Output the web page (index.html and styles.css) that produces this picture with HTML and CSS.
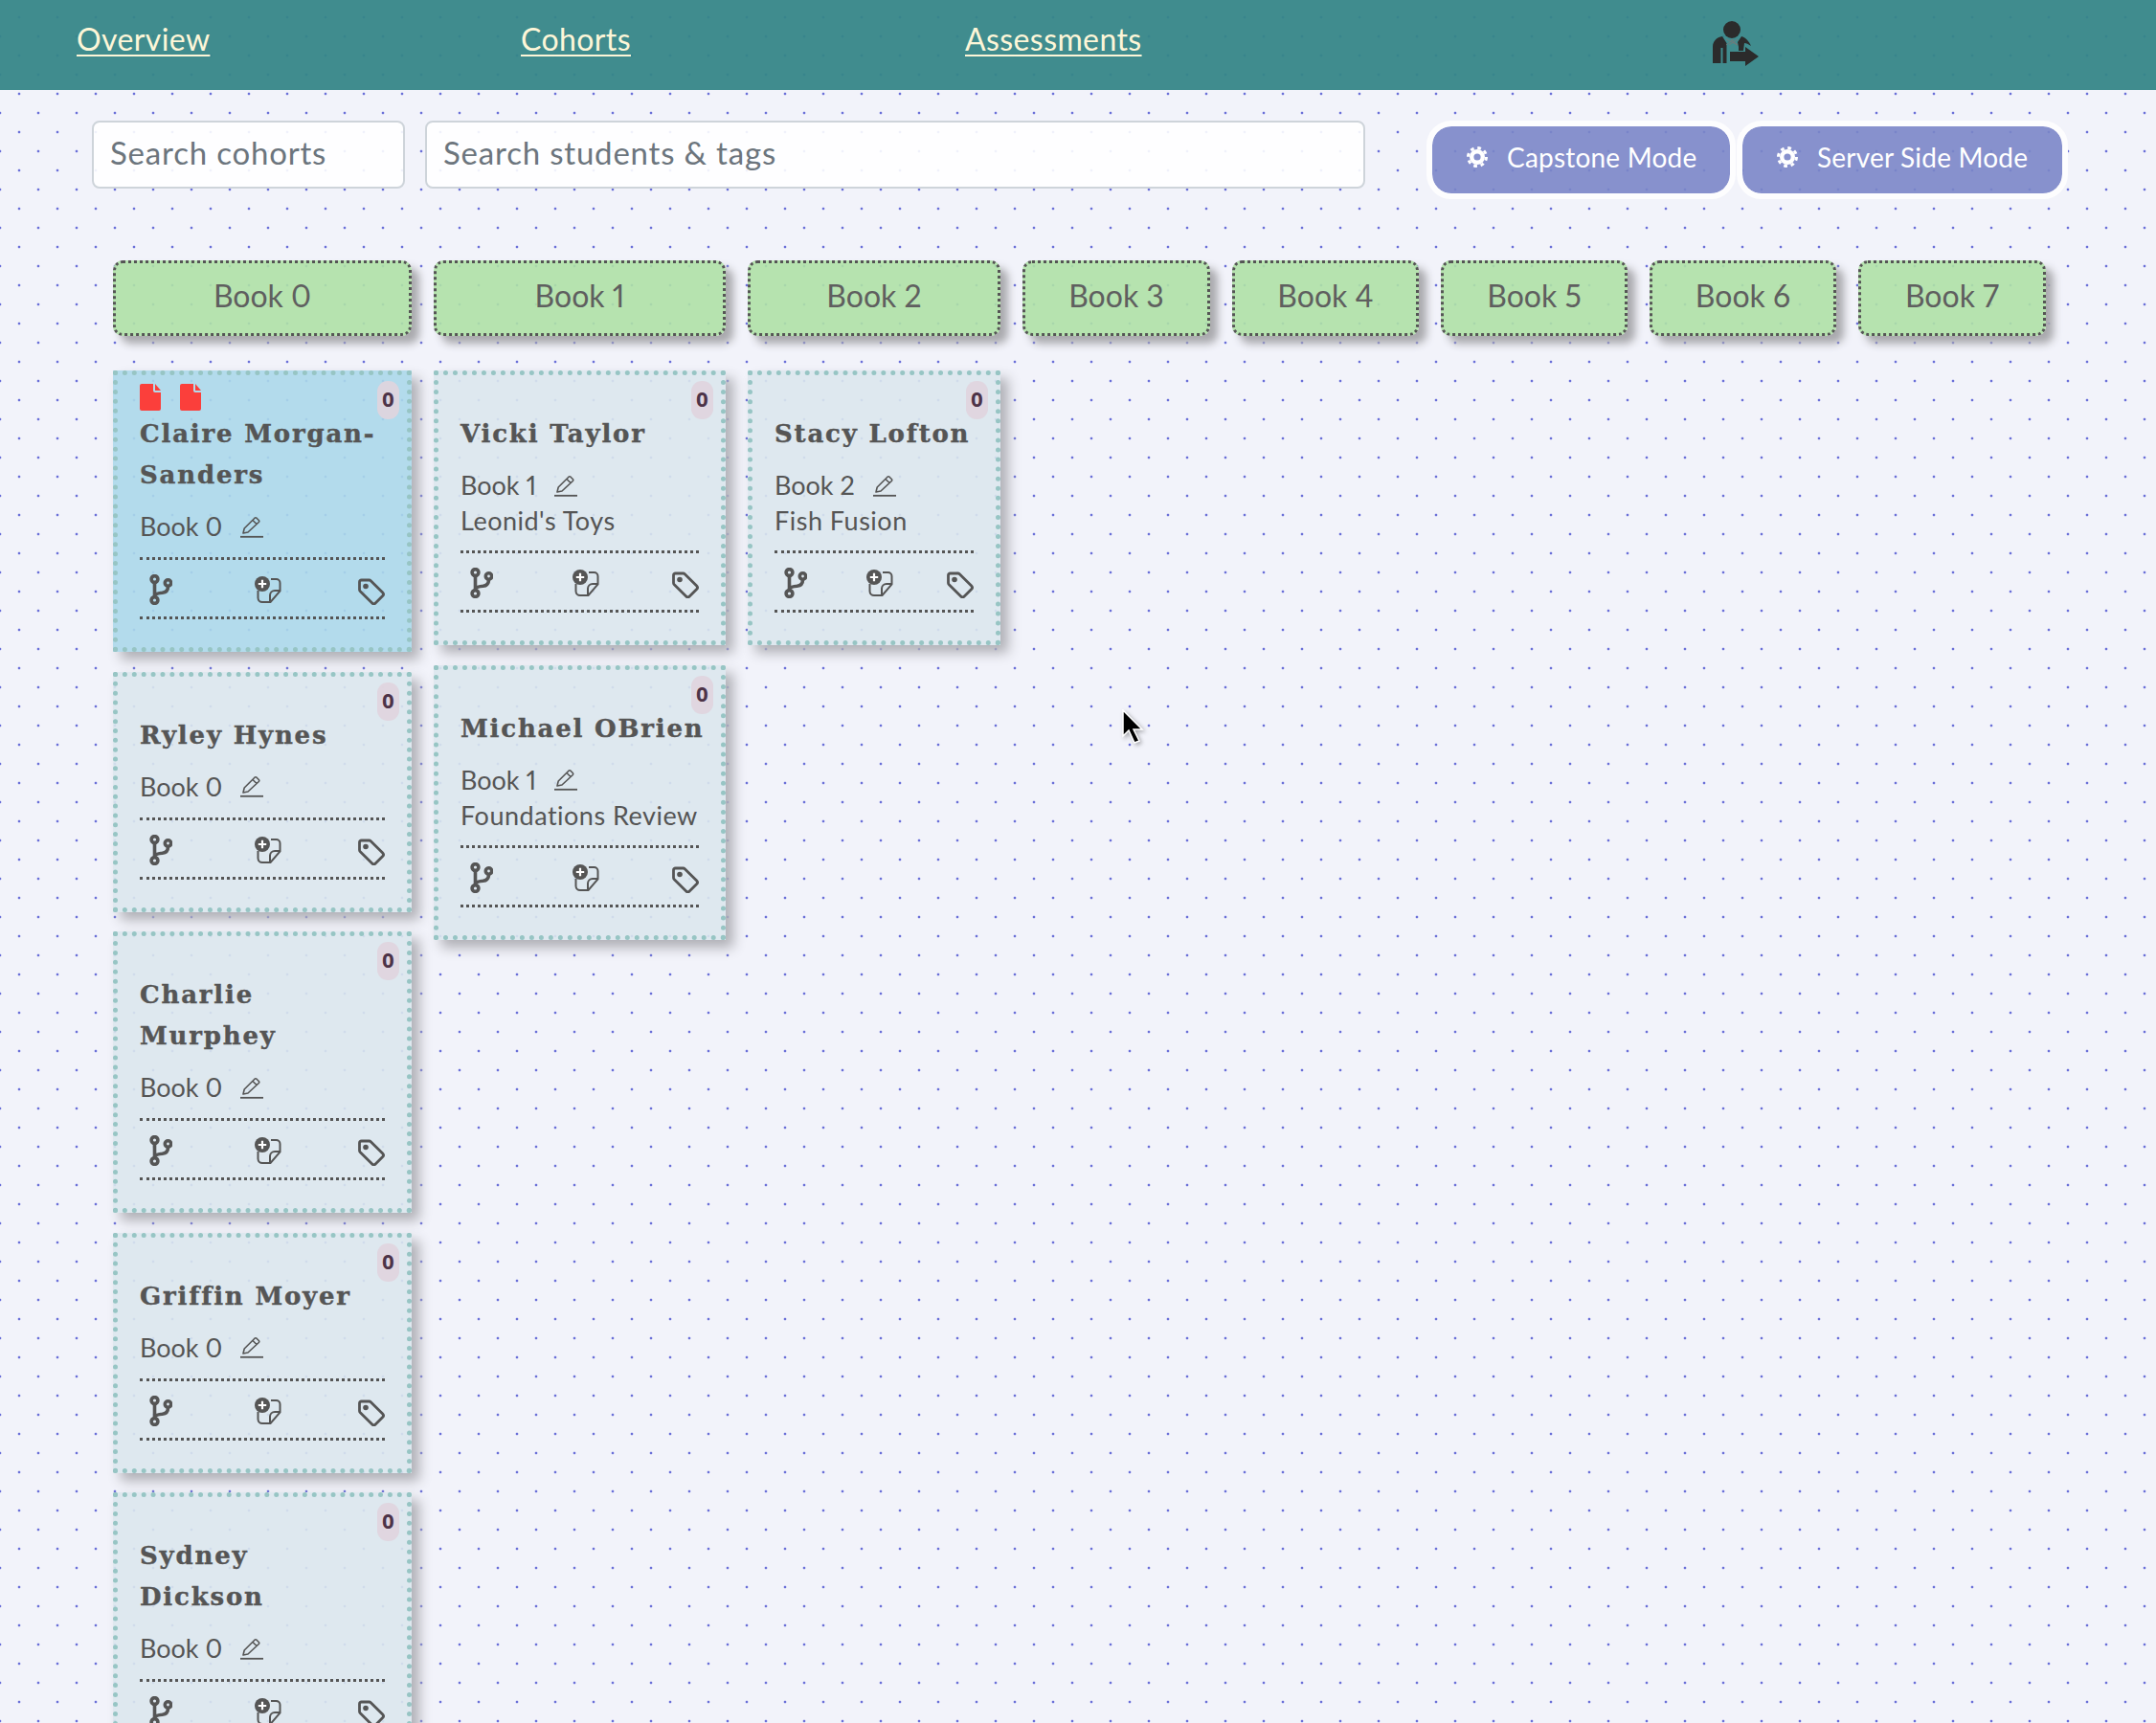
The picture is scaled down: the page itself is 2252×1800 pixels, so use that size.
FILE: index.html
```html
<!DOCTYPE html>
<html lang="en">
<head>
  <meta charset="UTF-8">
  <title>Student Board</title>
  <link rel="stylesheet" href="styles.css">
</head>
<body>
<svg class="defs" width="0" height="0">
  <symbol id="i-file" viewBox="0 0 22 28">
    <path d="M2 0h12v7a2 2 0 0 0 2 2h6v17a2 2 0 0 1-2 2H2a2 2 0 0 1-2-2V2a2 2 0 0 1 2-2z" fill="#fb3f3b"/>
    <path d="M16 0l6 7h-6z" fill="#fb3f3b"/>
  </symbol>
  <symbol id="i-pencil" viewBox="0 0 24 23">
    <path d="M3 18l1.2-5L15 2.2a1.5 1.5 0 0 1 2 0l2.300 2.300a1.500 1.500 0 0 1 0 2L8 17z M13 4.500l4.500 4.500" fill="none" stroke="#555" stroke-width="1.600" stroke-linejoin="round"/>
    <path d="M0 21.800h24" stroke="#555" stroke-width="1.800"/>
  </symbol>
  <symbol id="i-branch" viewBox="0 0 24 32">
    <g fill="none" stroke="#555" stroke-width="3.600">
      <circle cx="5.500" cy="5" r="3.400"/>
      <circle cx="5.500" cy="27" r="3.400"/>
      <circle cx="19.500" cy="9" r="3.200"/>
      <path d="M5.500 8.500v15 M19.500 12.500c0 5-3 6.500-6 6.800c-4 .3-8 1-8 4.200"/>
    </g>
  </symbol>
  <symbol id="i-note" viewBox="0 0 28 28">
    <path d="M17 3h5.500a4 4 0 0 1 4 4v8.500L16.500 27H8a4.500 4.500 0 0 1-4.500-4.500V15 M26.500 15H21a5 5 0 0 0-5 5v7" fill="none" stroke="#555" stroke-width="2"/>
    <circle cx="8" cy="8" r="8" fill="#555"/>
    <path d="M8 3.800v8.400 M3.800 8h8.400" stroke="#fff" stroke-width="2.200"/>
  </symbol>
  <symbol id="i-tag" viewBox="0 0 28 28">
    <path d="M3.500 2h8a2.500 2.500 0 0 1 1.800.7l12.400 12.400a2.500 2.500 0 0 1 0 3.500l-7.500 7.500a2.500 2.500 0 0 1-3.500 0L2.300 13.700a2.500 2.500 0 0 1-.8-1.800V4a2 2 0 0 1 2-2z" fill="none" stroke="#555" stroke-width="2.800"/>
    <circle cx="8" cy="8.500" r="2.800" fill="#555"/>
  </symbol>
  <symbol id="i-gear" viewBox="0 0 22 24">
    <circle cx="11" cy="12" r="5.800" fill="none" stroke="#fff" stroke-width="4.400"/>
    <circle cx="11" cy="12" r="9.500" fill="none" stroke="#fff" stroke-width="3" stroke-dasharray="3.700 3.760"/>
  </symbol>
</svg>

<header class="topnav">
  <a class="nav-link" href="#">Overview</a>
  <a class="nav-link" href="#">Cohorts</a>
  <a class="nav-link" href="#">Assessments</a>
  <svg class="logout" viewBox="0 0 50 48">
    <circle cx="21" cy="9" r="9" fill="#2b2b2b"/>
    <path d="M1 44V27c0-6 4-10 10-11l4.500 7V44h-4V28H9.500V44z" fill="#2b2b2b"/>
    <path d="M28 27l-1-5 4-6c4 1 8 5 10 10-3-2-5-3-7-3l-1 8h-5z" fill="#2b2b2b"/>
    <path d="M15 19l12 6 M18 25l9-6 M15 25l8-6 M20 19l7 6" stroke="#777" stroke-width=".8"/>
    <path d="M19 32h16v-5l14 10-14 10v-5H19z" fill="#2b2b2b"/>
  </svg>
</header>

<section class="toolbar">
  <input class="search search-cohort" type="text" placeholder="Search cohorts">
  <input class="search search-student" type="text" placeholder="Search students &amp; tags">
  <div class="modes">
    <button class="mode-btn mode-capstone"><svg class="gear"><use href="#i-gear"/></svg>Capstone Mode</button>
    <button class="mode-btn mode-server"><svg class="gear"><use href="#i-gear"/></svg>Server Side Mode</button>
  </div>
</section>

<main class="board">
  <div class="column">
    <div class="book-head">Book 0</div>
    <article class="card card-selected">
      <div class="badge">0</div>
      <div class="flags">
        <svg class="flag"><use href="#i-file"/></svg>
        <svg class="flag"><use href="#i-file"/></svg>
      </div>
      <h3 class="name">Claire Morgan-Sanders</h3>
      <div class="book-row">Book 0 <svg class="pencil"><use href="#i-pencil"/></svg></div>
      <div class="actions">
        <svg class="ic-branch"><use href="#i-branch"/></svg>
        <svg class="ic-note"><use href="#i-note"/></svg>
        <svg class="ic-tag"><use href="#i-tag"/></svg>
      </div>
    </article>
    <article class="card">
      <div class="badge">0</div>
      <div class="flags"></div>
      <h3 class="name">Ryley Hynes</h3>
      <div class="book-row">Book 0 <svg class="pencil"><use href="#i-pencil"/></svg></div>
      <div class="actions">
        <svg class="ic-branch"><use href="#i-branch"/></svg>
        <svg class="ic-note"><use href="#i-note"/></svg>
        <svg class="ic-tag"><use href="#i-tag"/></svg>
      </div>
    </article>
    <article class="card">
      <div class="badge">0</div>
      <div class="flags"></div>
      <h3 class="name">Charlie Murphey</h3>
      <div class="book-row">Book 0 <svg class="pencil"><use href="#i-pencil"/></svg></div>
      <div class="actions">
        <svg class="ic-branch"><use href="#i-branch"/></svg>
        <svg class="ic-note"><use href="#i-note"/></svg>
        <svg class="ic-tag"><use href="#i-tag"/></svg>
      </div>
    </article>
    <article class="card">
      <div class="badge">0</div>
      <div class="flags"></div>
      <h3 class="name">Griffin Moyer</h3>
      <div class="book-row">Book 0 <svg class="pencil"><use href="#i-pencil"/></svg></div>
      <div class="actions">
        <svg class="ic-branch"><use href="#i-branch"/></svg>
        <svg class="ic-note"><use href="#i-note"/></svg>
        <svg class="ic-tag"><use href="#i-tag"/></svg>
      </div>
    </article>
    <article class="card">
      <div class="badge">0</div>
      <div class="flags"></div>
      <h3 class="name">Sydney Dickson</h3>
      <div class="book-row">Book 0 <svg class="pencil"><use href="#i-pencil"/></svg></div>
      <div class="actions">
        <svg class="ic-branch"><use href="#i-branch"/></svg>
        <svg class="ic-note"><use href="#i-note"/></svg>
        <svg class="ic-tag"><use href="#i-tag"/></svg>
      </div>
    </article>
  </div>

  <div class="column">
    <div class="book-head">Book 1</div>
    <article class="card">
      <div class="badge">0</div>
      <div class="flags"></div>
      <h3 class="name">Vicki Taylor</h3>
      <div class="book-row">Book 1 <svg class="pencil"><use href="#i-pencil"/></svg></div>
      <div class="project">Leonid's Toys</div>
      <div class="actions">
        <svg class="ic-branch"><use href="#i-branch"/></svg>
        <svg class="ic-note"><use href="#i-note"/></svg>
        <svg class="ic-tag"><use href="#i-tag"/></svg>
      </div>
    </article>
    <article class="card">
      <div class="badge">0</div>
      <div class="flags"></div>
      <h3 class="name name-nowrap">Michael OBrien</h3>
      <div class="book-row">Book 1 <svg class="pencil"><use href="#i-pencil"/></svg></div>
      <div class="project">Foundations Review</div>
      <div class="actions">
        <svg class="ic-branch"><use href="#i-branch"/></svg>
        <svg class="ic-note"><use href="#i-note"/></svg>
        <svg class="ic-tag"><use href="#i-tag"/></svg>
      </div>
    </article>
  </div>

  <div class="column">
    <div class="book-head">Book 2</div>
    <article class="card">
      <div class="badge">0</div>
      <div class="flags"></div>
      <h3 class="name name-nowrap">Stacy Lofton</h3>
      <div class="book-row">Book 2 <svg class="pencil"><use href="#i-pencil"/></svg></div>
      <div class="project">Fish Fusion</div>
      <div class="actions">
        <svg class="ic-branch"><use href="#i-branch"/></svg>
        <svg class="ic-note"><use href="#i-note"/></svg>
        <svg class="ic-tag"><use href="#i-tag"/></svg>
      </div>
    </article>
  </div>

  <div class="column"><div class="book-head">Book 3</div></div>
  <div class="column"><div class="book-head">Book 4</div></div>
  <div class="column"><div class="book-head">Book 5</div></div>
  <div class="column"><div class="book-head">Book 6</div></div>
  <div class="column"><div class="book-head">Book 7</div></div>
</main>

<!-- mouse pointer caught in the screenshot -->
<svg class="cursor" viewBox="0 0 24 36">
  <path d="M2 1l20 20h-9l6 12-5 2-6-13-6 6z" fill="#000" stroke="#fff" stroke-width="1.500"/>
</svg>
</body>
</html>
```

FILE: styles.css
```css
/* global styles */
:root {
  --color-text: #555;
  --color-dot: #6a6fd8;
  --font-ui: Lato, "Noto Sans", sans-serif;
}

* {
  box-sizing: border-box;
}

html,
body {
  margin: 0;
  padding: 0;
  height: 100%;
  overflow: hidden;
}

body {
  position: relative;
  font-family: var(--font-ui);
  font-variant-numeric: proportional-nums;
  color: var(--color-text);
  background-color: #f2f3fa;
  background-image:
    radial-gradient(circle, var(--color-dot) 1.5px, transparent 1.6px),
    radial-gradient(circle, var(--color-dot) 1.5px, transparent 1.6px);
  background-size: 40px 40px;
  background-position: 0 -2px, 20px 18px;
}

.defs {
  position: absolute;
}

/* nav */
.topnav {
  display: flex;
  align-items: flex-start;
  height: 94px;
  padding: 19px 0 0 80px;
  background: rgba(54, 134, 136, 0.95);
}

.nav-link {
  width: 464px;
  font-size: 32px;
  line-height: 44px;
  letter-spacing: 0.4px;
  color: #fdf6d8;
  text-decoration: underline;
  text-underline-offset: 4px;
  text-decoration-thickness: 2px;
}

.logout {
  width: 50px;
  height: 48px;
  margin: 3px 0 0 316px;
}

/* search + mode buttons */
.toolbar {
  display: flex;
  align-items: flex-start;
  margin-top: 32px;
  padding-left: 96px;
}

.search {
  height: 71px;
  padding: 0 17px 6px;
  font-family: var(--font-ui);
  font-size: 33px;
  letter-spacing: 0.8px;
  color: #495057;
  background: rgba(255, 255, 255, 0.9);
  border: 2px solid #ced4da;
  border-radius: 8px;
  outline: none;
}

.search::placeholder {
  color: #6c757d;
}

.search-cohort {
  width: 327px;
}

.search-student {
  width: 982px;
  margin-left: 21px;
}

.modes {
  display: flex;
  gap: 1px;
  margin-left: 64px;
}

.mode-btn {
  display: flex;
  align-items: center;
  height: 82px;
  padding: 0 0 6px 36px;
  font-family: var(--font-ui);
  font-size: 28px;
  letter-spacing: 0.2px;
  color: #fff;
  background: rgba(123, 134, 200, 0.9);
  background-clip: padding-box;
  border: 6px solid #fdfdfe;
  border-radius: 26px;
}

.mode-capstone {
  width: 323px;
}

.mode-server {
  width: 346px;
}

.gear {
  width: 22px;
  height: 24px;
  margin-right: 20px;
}

/* board */
.board {
  display: grid;
  grid-template-columns: 312px 305px 264px 196px 195px 195px 195px 196px;
  column-gap: 23px;
  margin-top: 64px;
  padding-left: 118px;
}

.column {
  display: flex;
  flex-direction: column;
  gap: 20.500px;
}

.book-head {
  height: 79px;
  margin-bottom: 15.500px;
  font-size: 32px;
  line-height: 67px;
  text-align: center;
  color: #5f5f5f;
  background: rgba(175, 225, 166, 0.9);
  border: 3px dotted #555;
  border-radius: 10px;
  box-shadow: 8px 8px 9px #a9a9ad;
}

.card {
  position: relative;
  flex: none;
  padding: 9px 23px 29px;
  background: rgba(219, 231, 237, 0.9);
  border: 5px dotted #97c5c4;
  box-shadow: 8px 8px 12px #b0b0b6;
}

.card-selected {
  background: rgba(172, 216, 234, 0.9);
}

.badge {
  position: absolute;
  top: 6px;
  right: 8px;
  width: 23px;
  height: 40px;
  font-family: "Noto Sans", sans-serif;
  font-size: 22px;
  font-weight: 700;
  line-height: 37px;
  text-align: center;
  color: #4d3348;
  background: rgba(224, 212, 222, 0.9);
  border-radius: 11px;
}

.flags {
  display: flex;
  gap: 20px;
  height: 31px;
}

.flag {
  width: 22px;
  height: 28px;
}

.name {
  margin: 0;
  padding-right: 6px;
  font-family: "DejaVu Serif", serif;
  font-size: 26px;
  font-weight: 700;
  line-height: 43px;
  letter-spacing: 1.800px;
  color: #555;
  -webkit-text-stroke: 0.4px #555;
}

.name-nowrap {
  padding-right: 0;
  white-space: nowrap;
}

.book-row {
  display: flex;
  align-items: center;
  margin-top: 14px;
  padding-bottom: 1px;
  font-size: 27px;
  line-height: 36px;
}

.pencil {
  width: 24px;
  height: 23px;
  margin-left: 19px;
}

.project {
  font-size: 27px;
  line-height: 36px;
  letter-spacing: 0.5px;
}

.actions {
  display: flex;
  justify-content: space-between;
  align-items: flex-start;
  margin-top: 13px;
  padding: 15px 0 12px 10px;
  height: 65px;
  border-top: 3px dotted #555;
  border-bottom: 3px dotted #555;
}

.ic-branch {
  width: 24px;
  height: 32px;
  margin-right: 6px;
}

.ic-note {
  width: 28px;
  height: 28px;
  margin-top: 2px;
}

.ic-tag {
  width: 28px;
  height: 28px;
  margin-top: 4px;
}

.cursor {
  position: absolute;
  left: 1171px;
  top: 741px;
  width: 24px;
  height: 36px;
  filter: drop-shadow(2px 2px 2px rgba(0, 0, 0, 0.3));
}
```
